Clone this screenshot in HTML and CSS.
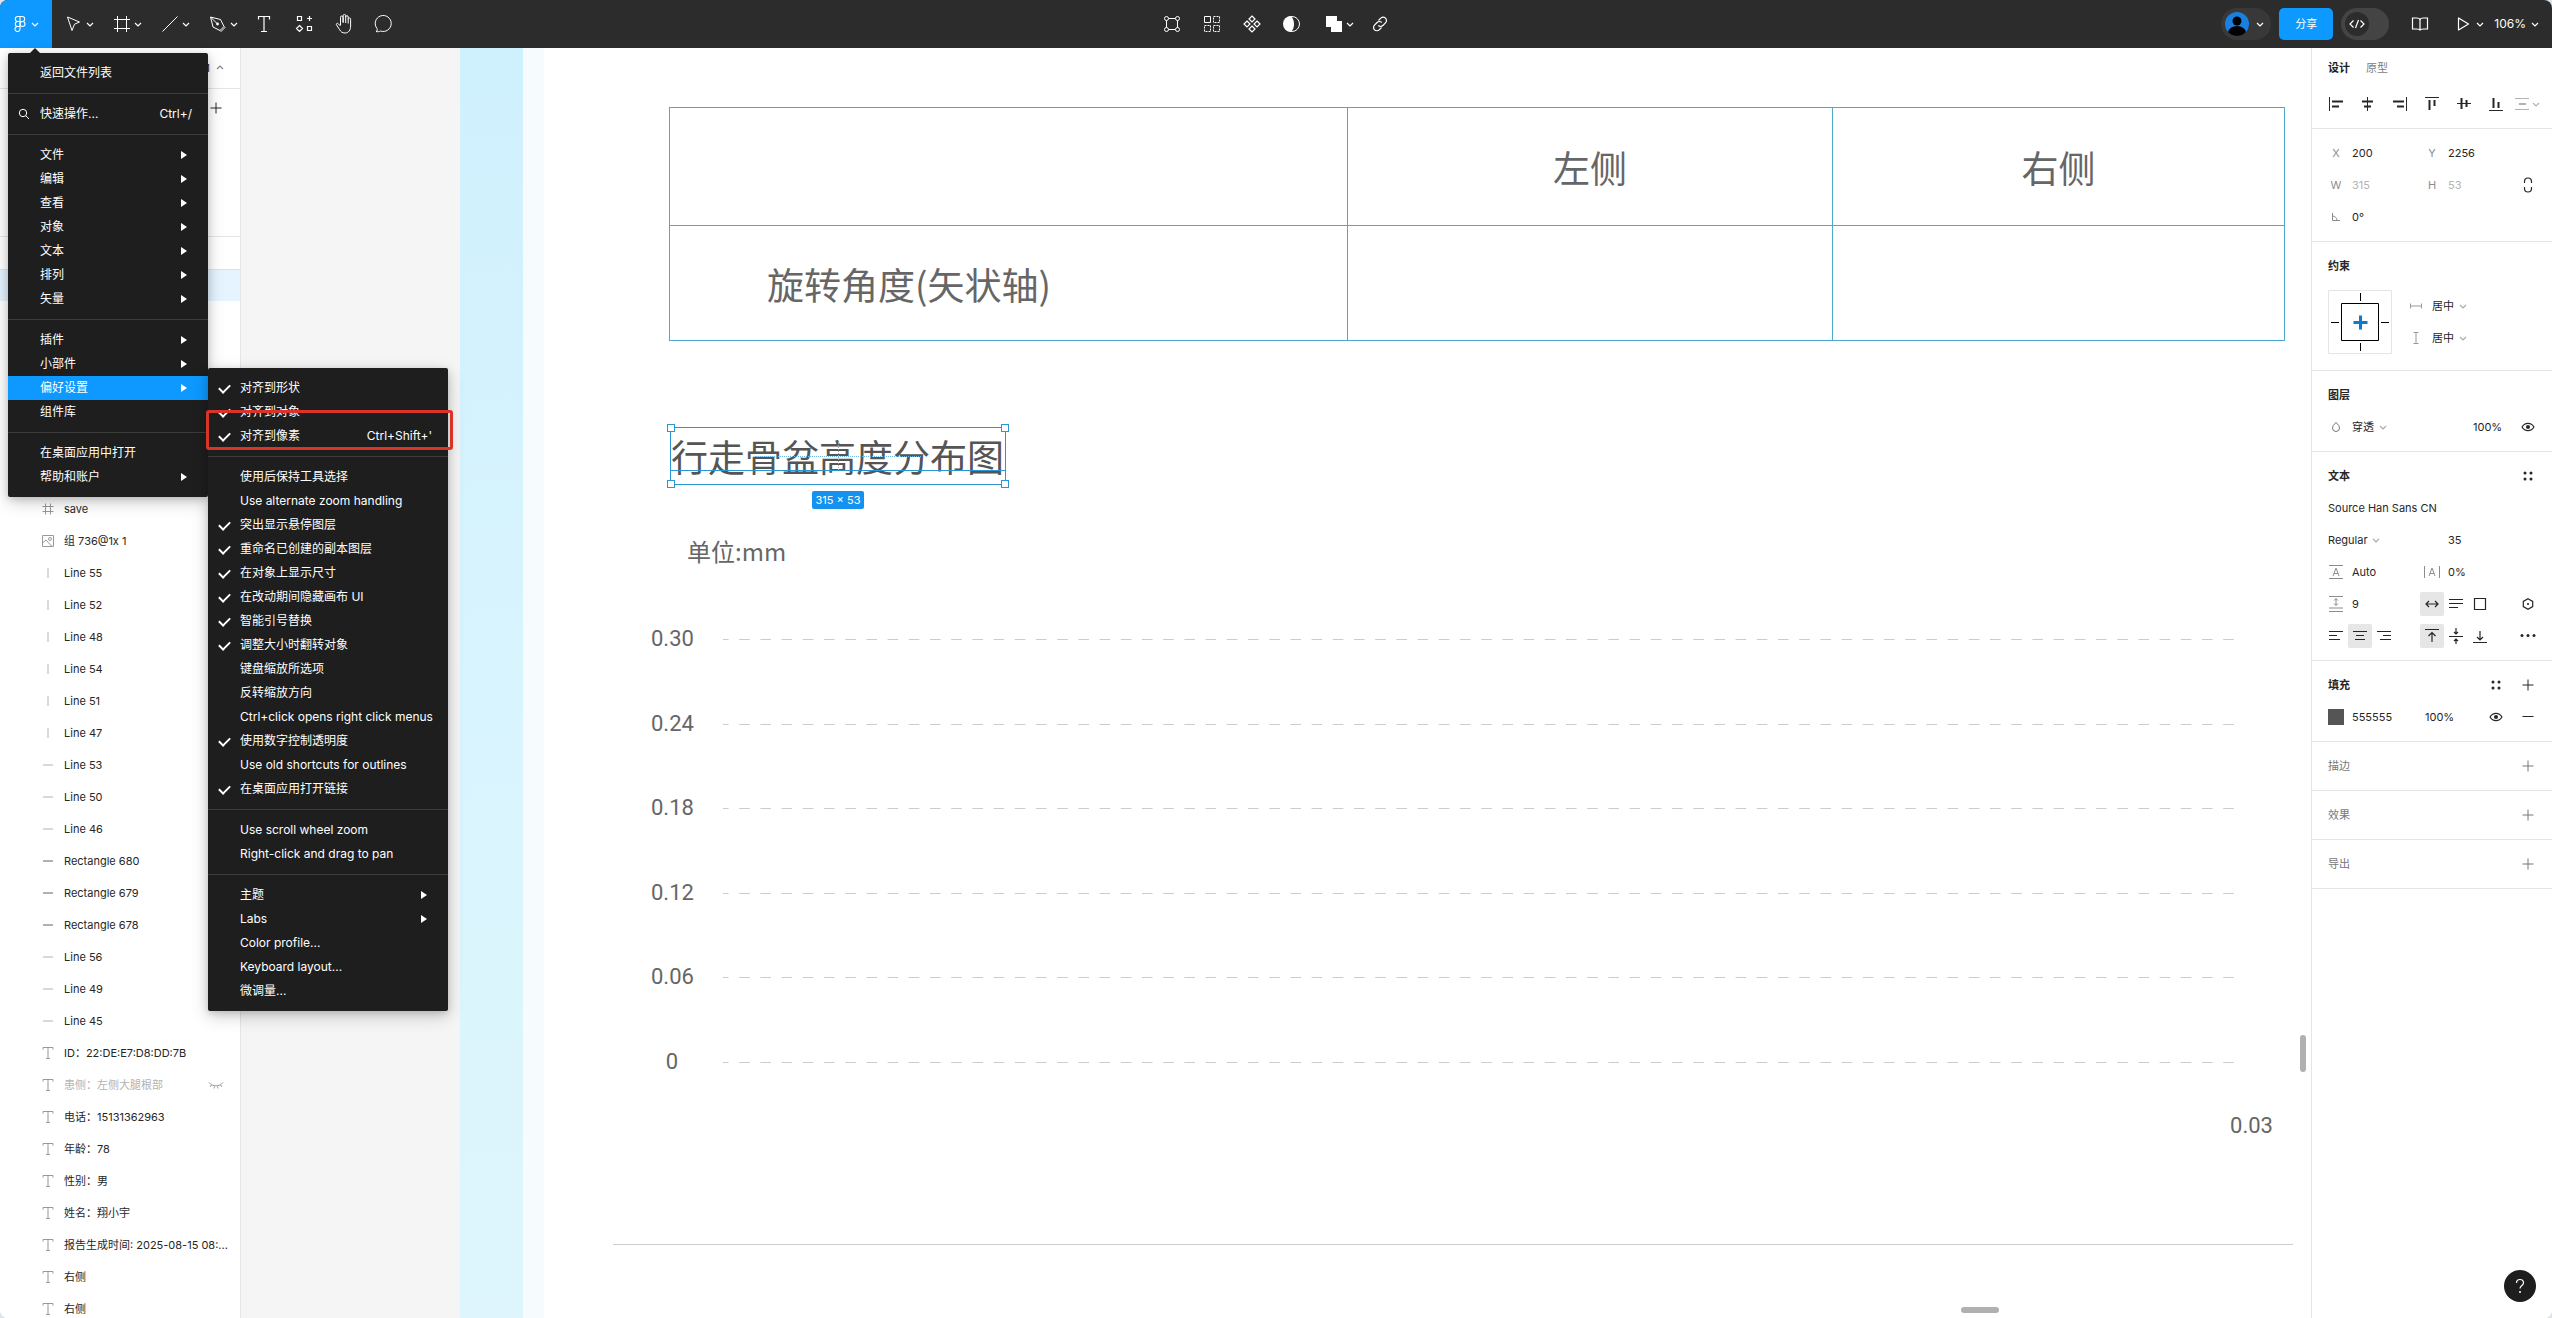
FILE: index.html
```html
<!DOCTYPE html>
<html lang="zh-CN">
<head>
<meta charset="utf-8">
<title>Figma</title>
<link rel="stylesheet" href="styles.css">
</head>
<body>
<svg class="sprite" aria-hidden="true">
  <symbol id="chev" viewBox="0 0 12 12"><path d="M3 5l3 3 3-3" fill="none" stroke="currentColor" stroke-width="1.2"/></symbol>
  <symbol id="plus" viewBox="0 0 16 16"><path d="M8 2.500v11M2.500 8h11" fill="none" stroke="currentColor"/></symbol>
  <symbol id="text" viewBox="0 0 16 16"><path d="M3 4.500V2.500h10v2M8 2.500v11M6 13.500h4" fill="none" stroke="currentColor"/></symbol>
  <symbol id="vline" viewBox="0 0 16 16"><path d="M8 3v10" stroke="currentColor" stroke-width="1.500"/></symbol>
  <symbol id="hline" viewBox="0 0 16 16"><path d="M3 8h10" stroke="currentColor" stroke-width="1.500"/></symbol>
  <symbol id="rect" viewBox="0 0 16 16"><path d="M3 8h10" stroke="#b0b0b0" stroke-width="2"/></symbol>
  <symbol id="eye" viewBox="0 0 16 16"><path d="M2 8c1.400-2.300 3.500-3.600 6-3.600S12.600 5.700 14 8c-1.400 2.300-3.500 3.600-6 3.600S3.400 10.300 2 8z" fill="none" stroke="currentColor" stroke-width="1.200"/><circle cx="8" cy="8" r="2" fill="currentColor"/></symbol>
  <symbol id="dots" viewBox="0 0 16 16"><g fill="currentColor"><circle cx="5" cy="5" r="1.500"/><circle cx="11" cy="5" r="1.500"/><circle cx="5" cy="11" r="1.500"/><circle cx="11" cy="11" r="1.500"/></g></symbol>
</svg>
<div class="app">
<header class="toolbar">
  <div class="tools">
    <div class="main-tool">
      <button class="logo" aria-label="主菜单"><svg class="i24" viewBox="0 0 24 24"><g fill="none" stroke="currentColor" stroke-width="1.100"><path d="M12 4.500H9.800a2.500 2.500 0 000 5H12zM12 4.500h2.200a2.500 2.500 0 010 5H12zM12 9.500H9.800a2.500 2.500 0 000 5H12zM12 14.500H9.800a2.500 2.500 0 102.200 2.500z"/><circle cx="14.500" cy="12" r="2.500"/></g></svg><svg class="i12"><use href="#chev"/></svg></button>
      <nav class="menu root-menu">
        <div class="group"><button>返回文件列表</button></div>
        <div class="group"><button><svg class="lead" viewBox="0 0 12 12"><circle cx="5" cy="5" r="3.700" fill="none" stroke="currentColor"/><path d="M7.700 7.700l3.300 3.300" stroke="currentColor"/></svg>快速操作...<kbd>Ctrl+/</kbd></button></div>
        <div class="group"><button class="sub">文件</button><button class="sub">编辑</button><button class="sub">查看</button><button class="sub">对象</button><button class="sub">文本</button><button class="sub">排列</button><button class="sub">矢量</button></div>
        <div class="group"><button class="sub">插件</button><button class="sub">小部件</button><button class="sub on">偏好设置</button><button>组件库</button></div>
        <div class="group"><button>在桌面应用中打开</button><button class="sub">帮助和账户</button></div>
      </nav>
      <nav class="menu prefs-menu">
        <div class="group">
          <label><input type="checkbox" checked>对齐到形状</label>
          <label><input type="checkbox" checked>对齐到对象</label>
          <label><input type="checkbox" checked>对齐到像素<kbd>Ctrl+Shift+'</kbd></label>
        </div>
        <div class="group">
          <label><input type="checkbox">使用后保持工具选择</label>
          <label><input type="checkbox">Use alternate zoom handling</label>
          <label><input type="checkbox" checked>突出显示悬停图层</label>
          <label><input type="checkbox" checked>重命名已创建的副本图层</label>
          <label><input type="checkbox" checked>在对象上显示尺寸</label>
          <label><input type="checkbox" checked>在改动期间隐藏画布 UI</label>
          <label><input type="checkbox" checked>智能引号替换</label>
          <label><input type="checkbox" checked>调整大小时翻转对象</label>
          <label><input type="checkbox">键盘缩放所选项</label>
          <label><input type="checkbox">反转缩放方向</label>
          <label><input type="checkbox">Ctrl+click opens right click menus</label>
          <label><input type="checkbox" checked>使用数字控制透明度</label>
          <label><input type="checkbox">Use old shortcuts for outlines</label>
          <label><input type="checkbox" checked>在桌面应用打开链接</label>
        </div>
        <div class="group">
          <label><input type="checkbox">Use scroll wheel zoom</label>
          <label><input type="checkbox">Right-click and drag to pan</label>
        </div>
        <div class="group"><button class="sub">主题</button><button class="sub">Labs</button><button>Color profile...</button><button>Keyboard layout...</button><button>微调量...</button></div>
        <div class="callout"></div>
      </nav>
    </div>
    <button class="tool drop" aria-label="移动"><svg class="i24" viewBox="0 0 24 24"><path d="M5.500 5l12 5-5 2.200-2.500 6.300z" fill="none" stroke="currentColor" stroke-linejoin="round"/></svg><svg class="i12"><use href="#chev"/></svg></button>
    <button class="tool drop" aria-label="画框"><svg class="i24" viewBox="0 0 24 24"><path d="M7.500 4v16M16.500 4v16M4 7.500h16M4 16.500h16" stroke="currentColor" fill="none"/></svg><svg class="i12"><use href="#chev"/></svg></button>
    <button class="tool drop" aria-label="直线"><svg class="i24" viewBox="0 0 24 24"><path d="M4.500 19.500l15-15" stroke="currentColor"/></svg><svg class="i12"><use href="#chev"/></svg></button>
    <button class="tool drop" aria-label="钢笔"><svg class="i24" viewBox="0 0 24 24"><g fill="none" stroke="currentColor" stroke-linejoin="round"><path d="M4.500 5l10 2.500 3.500 7-4 4-7-3.500zM14 18.500l1 1 4-4-1-1M4.500 5l6.500 6.500"/></g><circle cx="11.500" cy="12" r="1.400" fill="currentColor"/></svg><svg class="i12"><use href="#chev"/></svg></button>
    <button class="tool" aria-label="文本"><svg class="i24" viewBox="0 0 24 24"><path d="M6.500 7.500v-3h11v3M12 4.500v15M9 19.500h6" fill="none" stroke="currentColor" stroke-width="1.200"/></svg></button>
    <button class="tool" aria-label="资源"><svg class="i24" viewBox="0 0 24 24"><path d="M5.500 4.500h4v4h-4zM15.500 14.500h4v4h-4zM17.500 4v5M15 6.500h5M7.500 13.500l3 3-3 3-3-3z" fill="none" stroke="currentColor" stroke-width="1.200"/></svg></button>
    <button class="tool" aria-label="抓手"><svg class="i24" viewBox="0 0 24 24"><path d="M8.500 13V5.300a1.300 1.300 0 012.600 0V11M11.100 10V3.800a1.300 1.300 0 012.600 0V11M13.700 5a1.200 1.200 0 012.500 0v6.500M16.200 7.200a1.200 1.200 0 012.400 0V14c0 4-2 7-5.500 7-3 0-4.300-1.300-5.500-3.300l-3.100-4.800c-.7-1.200.9-2.200 1.900-1.100l2.100 2.200" fill="none" stroke="currentColor" stroke-linejoin="round"/></svg></button>
    <button class="tool" aria-label="评论"><svg class="i24" viewBox="0 0 24 24"><path d="M4 19.500c1.300-.6 1.500-1.400 1-3a8 8 0 113.500 2.500c-1.500.8-3 .9-4.500.5z" fill="none" stroke="currentColor" stroke-linejoin="round"/></svg></button>
  </div>
  <div class="context">
    <button class="tool" aria-label="编辑对象"><svg class="i24" viewBox="0 0 24 24"><g fill="none" stroke="currentColor"><path d="M8.500 6.500h7M8.500 17.500h7M6.500 8.500v7M17.500 8.500v7"/><circle cx="6.500" cy="6.500" r="2"/><circle cx="17.500" cy="6.500" r="2"/><circle cx="6.500" cy="17.500" r="2"/><circle cx="17.500" cy="17.500" r="2"/></g></svg></button>
    <button class="tool" aria-label="整理"><svg class="i24" viewBox="0 0 24 24"><g fill="none" stroke="currentColor"><path d="M4.500 4.500h6v6h-6z"/><path stroke-dasharray="2 1" d="M13.500 4.500h6v6h-6zM4.500 13.500h6v6h-6zM13.500 13.500h6v6h-6z"/></g></svg></button>
    <button class="tool" aria-label="创建组件"><svg class="i24" viewBox="0 0 24 24"><path d="M12 4l3 3-3 3-3-3zM12 14l3 3-3 3-3-3zM7 9l3 3-3 3-3-3zM17 9l3 3-3 3-3-3z" fill="none" stroke="currentColor" stroke-width="1.200"/></svg></button>
    <button class="tool" aria-label="蒙版"><svg class="i24" viewBox="0 0 24 24"><circle cx="12" cy="12" r="7.500" fill="none" stroke="currentColor"/><path d="M11 4a8 8 0 000 16c2-2 3-5 3-8s-1-6-3-8z" fill="currentColor"/></svg></button>
    <button class="tool drop" aria-label="布尔运算"><svg class="i24" viewBox="0 0 24 24"><path d="M4 4h11v5h5v11H9v-5H4z" fill="currentColor"/></svg><svg class="i12"><use href="#chev"/></svg></button>
    <button class="tool" aria-label="链接"><svg class="i24" viewBox="0 0 24 24"><path d="M10.500 8.500l2.300-2.300a3.200 3.200 0 014.700 4.700l-2.600 2.600a3.200 3.200 0 01-4.600 0M13.500 15.500l-2.300 2.300a3.200 3.200 0 01-4.700-4.700l2.600-2.600a3.200 3.200 0 014.600 0" fill="none" stroke="currentColor" stroke-width="1.200"/></svg></button>
  </div>
  <div class="account">
    <button class="user" aria-label="账户"><svg class="avatar" viewBox="0 0 24 24"><clipPath id="round"><circle cx="12" cy="12" r="12"/></clipPath><g clip-path="url(#round)"><path fill="#1a80e0" d="M0 0h24v24H0z"/><circle cx="12" cy="9" r="4.500"/><ellipse cx="12" cy="20.500" rx="9" ry="6.500"/></g></svg><svg class="i12"><use href="#chev"/></svg></button>
    <button class="share">分享</button>
    <button class="dev" aria-label="开发模式"><span><svg class="i16" viewBox="0 0 16 16"><path d="M4.500 4.500L1 8l3.500 3.500M11.500 4.500L15 8l-3.500 3.500M9.500 4l-3 8" fill="none" stroke="currentColor" stroke-width="1.200"/></svg></span></button>
    <button class="tool book" aria-label="文档"><svg class="i24" viewBox="0 0 24 24"><path d="M12 8c0-1.400-1.500-2-3.500-2h-4v11h4c2 0 3.500.4 3.500 1.500 0-1.100 1.500-1.500 3.500-1.500h4V6h-4C13.500 6 12 6.600 12 8zM12 8v10.500" fill="none" stroke="currentColor" stroke-width="1.200"/></svg></button>
    <button class="tool drop" aria-label="演示"><svg class="i24" viewBox="0 0 24 24"><path d="M6.500 6v12l10-6z" fill="none" stroke="currentColor" stroke-width="1.200" stroke-linejoin="round"/></svg><svg class="i12"><use href="#chev"/></svg></button>
    <button class="zoom">106%<svg class="i12"><use href="#chev"/></svg></button>
  </div>
</header>
<div class="workspace">
  <aside class="layers">
    <div class="pages-head"><span>页面 1</span><svg class="i12 up"><use href="#chev"/></svg></div>
    <div class="pages"><button aria-label="添加页面"><svg class="i16"><use href="#plus"/></svg></button></div>
    <div class="selected"></div>
    <ul>
      <li><svg class="i16" viewBox="0 0 16 16"><path d="M5.500 2.500v11M10.500 2.500v11M2.500 5.500h11M2.500 10.500h11" stroke="#999"/></svg>save</li>
      <li><svg class="i16" viewBox="0 0 16 16"><path d="M2.500 2.500h11v11h-11zM2.500 10L6 7l6 6.500" fill="none" stroke="#999"/><circle cx="10" cy="6" r="1.500" fill="none" stroke="#999"/></svg>组 736@1x 1</li>
      <li><svg class="i16"><use href="#vline"/></svg>Line 55</li>
      <li><svg class="i16"><use href="#vline"/></svg>Line 52</li>
      <li><svg class="i16"><use href="#vline"/></svg>Line 48</li>
      <li><svg class="i16"><use href="#vline"/></svg>Line 54</li>
      <li><svg class="i16"><use href="#vline"/></svg>Line 51</li>
      <li><svg class="i16"><use href="#vline"/></svg>Line 47</li>
      <li><svg class="i16"><use href="#hline"/></svg>Line 53</li>
      <li><svg class="i16"><use href="#hline"/></svg>Line 50</li>
      <li><svg class="i16"><use href="#hline"/></svg>Line 46</li>
      <li><svg class="i16"><use href="#rect"/></svg>Rectangle 680</li>
      <li><svg class="i16"><use href="#rect"/></svg>Rectangle 679</li>
      <li><svg class="i16"><use href="#rect"/></svg>Rectangle 678</li>
      <li><svg class="i16"><use href="#hline"/></svg>Line 56</li>
      <li><svg class="i16"><use href="#hline"/></svg>Line 49</li>
      <li><svg class="i16"><use href="#hline"/></svg>Line 45</li>
      <li><svg class="i16"><use href="#text"/></svg>ID：22:DE:E7:D8:DD:7B</li>
      <li class="hidden"><svg class="i16"><use href="#text"/></svg><span>患侧：左侧大腿根部</span><svg class="i16 lid" viewBox="0 0 16 16"><path d="M1 5.500c3.500 4.500 10.500 4.500 14 0M3.500 8l-1.500 2M6.500 9.500L6 11.500M9.500 9.500l.5 2M12.500 8l1.500 2" fill="none" stroke="#999"/></svg></li>
      <li><svg class="i16"><use href="#text"/></svg>电话：15131362963</li>
      <li><svg class="i16"><use href="#text"/></svg>年龄：78</li>
      <li><svg class="i16"><use href="#text"/></svg>性别：男</li>
      <li><svg class="i16"><use href="#text"/></svg>姓名：翔小宇</li>
      <li><svg class="i16"><use href="#text"/></svg>报告生成时间: 2025-08-15 08:...</li>
      <li><svg class="i16"><use href="#text"/></svg>右侧</li>
      <li><svg class="i16"><use href="#text"/></svg>右侧</li>
    </ul>
  </aside>
  <main class="canvas">
    <div class="stripe"></div>
    <div class="edge"></div>
    <section class="artboard">
      <table>
        <colgroup><col class="c1"><col class="c2"><col></colgroup>
        <tr class="head"><th></th><th>左侧</th><th>右侧</th></tr>
        <tr><td>旋转角度(矢状轴)</td><td></td><td></td></tr>
      </table>
      <h2>行走骨盆高度分布图<i class="h tl"></i><i class="h tr"></i><i class="h bl"></i><i class="h br"></i><i class="base"></i><i class="cross-h"></i><i class="cross-v"></i><span class="size">315 × 53</span></h2>
      <p class="unit">单位:mm</p>
      <div class="chart">
        <div class="tick"><span>0.30</span><svg><line x1="0" y1="12.500" x2="100%" y2="12.500"/></svg></div>
        <div class="tick"><span>0.24</span><svg><line x1="0" y1="12.500" x2="100%" y2="12.500"/></svg></div>
        <div class="tick"><span>0.18</span><svg><line x1="0" y1="12.500" x2="100%" y2="12.500"/></svg></div>
        <div class="tick"><span>0.12</span><svg><line x1="0" y1="12.500" x2="100%" y2="12.500"/></svg></div>
        <div class="tick"><span>0.06</span><svg><line x1="0" y1="12.500" x2="100%" y2="12.500"/></svg></div>
        <div class="tick"><span>0</span><svg><line x1="0" y1="12.500" x2="100%" y2="12.500"/></svg></div>
      </div>
      <p class="xlabel">0.03</p>
      <hr>
    </section>
    <div class="bar-v"></div>
    <div class="bar-h"></div>
  </main>
  <aside class="inspector">
    <section class="top">
      <div class="tabs"><button class="active">设计</button><button>原型</button></div>
      <div class="aligns">
        <button aria-label="左对齐"><svg class="i16" viewBox="0 0 16 16"><path d="M1.500 1v14" stroke="currentColor"/><path d="M4 5.500h11M4 10.500h7" stroke="currentColor" stroke-width="2"/></svg></button>
        <button aria-label="水平居中"><svg class="i16" viewBox="0 0 16 16"><path d="M7.500 1v14" stroke="currentColor"/><path d="M2 5.500h11M4 10.500h7" stroke="currentColor" stroke-width="2"/></svg></button>
        <button aria-label="右对齐"><svg class="i16" viewBox="0 0 16 16"><path d="M14.500 1v14" stroke="currentColor"/><path d="M1 5.500h11M5 10.500h7" stroke="currentColor" stroke-width="2"/></svg></button>
        <button aria-label="顶对齐"><svg class="i16" viewBox="0 0 16 16"><path d="M1 1.500h14" stroke="currentColor"/><path d="M5.500 4v10M10.500 4v6" stroke="currentColor" stroke-width="2"/></svg></button>
        <button aria-label="垂直居中"><svg class="i16" viewBox="0 0 16 16"><path d="M1 7.500h14" stroke="currentColor"/><path d="M5.500 2v11M10.500 4v7" stroke="currentColor" stroke-width="2"/></svg></button>
        <button aria-label="底对齐"><svg class="i16" viewBox="0 0 16 16"><path d="M1 14.500h14" stroke="currentColor"/><path d="M5.500 2v10M10.500 6v6" stroke="currentColor" stroke-width="2"/></svg></button>
        <button class="dim" aria-label="分布"><svg class="i16" viewBox="0 0 16 16"><path d="M1 2.500h14M1 13.500h14" stroke="currentColor"/><path d="M5 8h7" stroke="currentColor" stroke-width="2"/></svg><svg class="i12"><use href="#chev"/></svg></button>
      </div>
    </section>
    <section>
      <div class="grid"><label for="x">X</label><input id="x" value="200"><label for="y">Y</label><input id="y" value="2256"></div>
      <div class="grid off"><label for="w">W</label><input id="w" value="315"><label for="h">H</label><input id="h" value="53"><button aria-label="约束比例"><svg class="i16" viewBox="0 0 16 16"><path d="M4.500 6V4.500a3.500 3.500 0 017 0V6M4.500 10v1.500a3.500 3.500 0 007 0V10" fill="none" stroke="currentColor" stroke-width="1.200"/></svg></button></div>
      <div class="grid"><label for="r" aria-label="旋转"><svg class="i16" viewBox="0 0 16 16"><path d="M4.500 4v7.500H12M4.500 7a4.500 4.500 0 014.500 4.500" fill="none" stroke="currentColor"/></svg></label><input id="r" value="0°"></div>
    </section>
    <section>
      <h3>约束</h3>
      <div class="con-body">
        <svg class="con-box" viewBox="0 0 64 64"><path d="M.5.5h63v63H.5z" fill="none" stroke="#e5e5e5"/><path d="M13.500 13.500h37v37h-37zM32.500 3v8M32.500 53v8M3 32.500h8M53 32.500h8" fill="none" stroke="#000"/><path d="M32.500 25.500v14M25.500 32.500h14" stroke="#0d7bd0" stroke-width="3"/></svg>
        <div class="con-list">
          <div class="pick"><svg class="i16" viewBox="0 0 16 16"><path d="M2.500 5.500v5M13.500 5.500v5M3 8h10" stroke="#999"/></svg><select aria-label="水平约束"><option>居中</option></select><svg class="i12"><use href="#chev"/></svg></div>
          <div class="pick"><svg class="i16" viewBox="0 0 16 16"><path d="M5.500 2.500h5M5.500 13.500h5M8 3v10" stroke="#999"/></svg><select aria-label="垂直约束"><option>居中</option></select><svg class="i12"><use href="#chev"/></svg></div>
        </div>
      </div>
    </section>
    <section>
      <h3>图层</h3>
      <div class="row"><span class="cell grey"><svg class="i16" viewBox="0 0 16 16"><path d="M8 3.500c2 2.200 3.500 3.600 3.500 5.500a3.500 3.500 0 01-7 0C4.500 7.100 6 5.700 8 3.500z" fill="none" stroke="currentColor"/></svg></span><div class="pick wide"><select aria-label="混合模式"><option>穿透</option></select><svg class="i12"><use href="#chev"/></svg></div><input class="pct" aria-label="不透明度" value="100%"><button class="cell" aria-label="显示"><svg class="i16"><use href="#eye"/></svg></button></div>
    </section>
    <section>
      <div class="row"><h3>文本</h3><button class="cell" aria-label="文本样式"><svg class="i16"><use href="#dots"/></svg></button></div>
      <div class="row pad">Source Han Sans CN</div>
      <div class="row pad"><div class="pick weight"><select aria-label="字重"><option>Regular</option></select><svg class="i12"><use href="#chev"/></svg></div><input class="fs" aria-label="字号" value="35"></div>
      <div class="grid"><label for="lh" aria-label="行高"><svg class="i16" viewBox="0 0 16 16"><path d="M1 1.500h14M1 14.500h14M5 12l3-8 3 8M6 9.500h4" fill="none" stroke="currentColor"/></svg></label><input id="lh" value="Auto"><label for="ls" aria-label="字距"><svg class="i16" viewBox="0 0 16 16"><path d="M.5 2v12M15.500 2v12M5 12l3-8 3 8M6 9.500h4" fill="none" stroke="currentColor"/></svg></label><input id="ls" value="0%"></div>
      <div class="grid"><label for="ps" aria-label="段落间距"><svg class="i16" viewBox="0 0 16 16"><path d="M1 .5h14M1 12h14M1 15.500h14M8 2.500v7M6 4.500l2-2 2 2M6 7.500l2 2 2-2" fill="none" stroke="currentColor"/></svg></label><input id="ps" value="9"><div class="seg">
        <button class="on" aria-label="自动宽度"><svg class="i16" viewBox="0 0 16 16"><path d="M2 8h12M5 5L2 8l3 3M11 5l3 3-3 3" fill="none" stroke="currentColor" stroke-width="1.200"/></svg></button><button aria-label="自动高度"><svg class="i16" viewBox="0 0 16 16"><path d="M1 3.500h14M1 7.500h14M1 11.500h9" stroke="currentColor"/></svg></button><button aria-label="固定尺寸"><svg class="i16" viewBox="0 0 16 16"><path d="M2.500 2.500h11v11h-11z" fill="none" stroke="currentColor" stroke-width="1.200"/></svg></button></div><button aria-label="设置"><svg class="i16" viewBox="0 0 16 16"><path d="M8 2.700l4.700 2.700v5.200L8 13.300l-4.700-2.700V5.400z" fill="none" stroke="currentColor" stroke-width="1.200"/><circle cx="8" cy="8" r="1" fill="currentColor"/></svg></button></div>
      <div class="grid"><div class="seg span2">
        <button aria-label="文本左对齐"><svg class="i16" viewBox="0 0 16 16"><path d="M1 3.500h14M1 7.500h8M1 11.500h11" stroke="currentColor"/></svg></button><button class="on" aria-label="文本居中"><svg class="i16" viewBox="0 0 16 16"><path d="M1 3.500h14M4 7.500h8M3 11.500h10" stroke="currentColor"/></svg></button><button aria-label="文本右对齐"><svg class="i16" viewBox="0 0 16 16"><path d="M1 3.500h14M7 7.500h8M4 11.500h11" stroke="currentColor"/></svg></button></div><div class="seg">
        <button class="on" aria-label="顶部"><svg class="i16" viewBox="0 0 16 16"><path d="M1 1.500h14M8 14V4.500M4.500 8L8 4.500 11.500 8" fill="none" stroke="currentColor" stroke-width="1.200"/></svg></button><button aria-label="中部"><svg class="i16" viewBox="0 0 16 16"><path d="M1 8.500h14M8 0v6M6 4l2 2 2-2M8 16.500V11M6 13l2-2 2 2" fill="none" stroke="currentColor" stroke-width="1.200"/></svg></button><button aria-label="底部"><svg class="i16" viewBox="0 0 16 16"><path d="M1 14.500h14M8 3v9M5 9l3 3 3-3" fill="none" stroke="currentColor" stroke-width="1.200"/></svg></button></div><button aria-label="更多"><svg class="i16" viewBox="0 0 16 16"><g fill="currentColor"><circle cx="2" cy="7.500" r="1.500"/><circle cx="8" cy="7.500" r="1.500"/><circle cx="14" cy="7.500" r="1.500"/></g></svg></button></div>
    </section>
    <section>
      <div class="row"><h3>填充</h3><button class="cell" aria-label="填充样式"><svg class="i16"><use href="#dots"/></svg></button><button class="cell" aria-label="添加填充"><svg class="i16"><use href="#plus"/></svg></button></div>
      <div class="row pad"><button class="swatch" aria-label="颜色"></button><input class="hex" aria-label="色值" value="555555"><input class="alpha" aria-label="填充不透明度" value="100%"><button class="cell" aria-label="显示填充"><svg class="i16"><use href="#eye"/></svg></button><button class="cell" aria-label="移除填充"><svg class="i16" viewBox="0 0 16 16"><path d="M2.500 7.500h11" stroke="currentColor"/></svg></button></div>
    </section>
    <section class="muted"><div class="row"><h3>描边</h3><button class="cell" aria-label="添加描边"><svg class="i16"><use href="#plus"/></svg></button></div></section>
    <section class="muted"><div class="row"><h3>效果</h3><button class="cell" aria-label="添加效果"><svg class="i16"><use href="#plus"/></svg></button></div></section>
    <section class="muted"><div class="row"><h3>导出</h3><button class="cell" aria-label="添加导出"><svg class="i16"><use href="#plus"/></svg></button></div></section>
    <button class="help" aria-label="帮助"><svg class="i16" viewBox="0 0 16 16"><path d="M4.500 5a3.500 3.500 0 117 0c0 2.500-3.500 2.500-3.500 5.500" fill="none" stroke="currentColor" stroke-width="1.200"/><circle cx="8" cy="14" r="1" fill="currentColor"/></svg></button>
  </aside>
</div>
</div>
</body>
</html>
```
FILE: styles.css
```css
* { box-sizing: border-box; }
body {
  margin: 0;
  background: #dfe3e6;
  color: #262626;
  font: 11px/16px Inter, "Noto Sans CJK SC", sans-serif;
}
button, input, select {
  margin: 0; padding: 0; border: 0;
  background: none; color: inherit; font: inherit;
  appearance: none;
}
input:focus, select:focus { outline: none; }
h2, h3, p, ul { margin: 0; padding: 0; }
svg { display: block; flex: none; }
.sprite { position: absolute; width: 0; height: 0; }
.i12 { width: 12px; height: 12px; }
.i16 { width: 16px; height: 16px; }
.i24 { width: 24px; height: 24px; }

.app {
  display: flex; flex-direction: column;
  height: 100vh; overflow: hidden;
  border-radius: 8px; background: #fff;
}

/* toolbar */
.toolbar {
  display: grid; grid-template-columns: 1fr auto 1fr;
  flex: none; height: 48px;
  background: #2c2c2c; color: #fff;
}
.tools, .context, .account { display: flex; }
.tool {
  display: flex; align-items: center; justify-content: center;
  width: 40px; height: 48px;
}
.drop { width: 48px; justify-content: flex-start; padding-left: 10px; }
.drop .i12 { margin-left: -2px; }
.main-tool { position: relative; z-index: 5; }
.logo {
  display: flex; align-items: center;
  width: 52px; height: 48px; padding-left: 8px;
  background: #0d99ff;
}
.logo .i12 { margin-left: -3px; }
.account { justify-content: flex-end; align-items: center; padding-right: 11px; }
.user {
  display: flex; align-items: center; gap: 5px;
  width: 50px; height: 32px; padding-left: 4px;
  border-radius: 16px; background: #383838;
}
.avatar { width: 24px; height: 24px; }
.share {
  width: 54px; height: 32px; margin: 0 8px;
  border-radius: 5px; background: #0d99ff;
}
.dev { width: 48px; height: 32px; border-radius: 16px; background: #444; }
.dev span {
  display: flex; align-items: center; justify-content: center;
  width: 24px; height: 24px; margin-left: 4px;
  border-radius: 50%; background: #2c2c2c;
}
.book { margin: 0 2px 0 11px; }
.zoom { display: flex; align-items: center; gap: 3px; height: 32px; padding-left: 4px; font-size: 12px; }

/* menus */
.menu {
  position: absolute;
  border-radius: 2px;
  background: #1e1e1e; color: #fff;
  font-size: 12px;
  box-shadow: 0 5px 17px rgba(0,0,0,.2), 0 2px 7px rgba(0,0,0,.15);
}
.root-menu { top: 53px; left: 8px; width: 200px; }
.root-menu::before {
  content: ""; position: absolute; left: 22px; top: -5px;
  border: 5px solid transparent; border-top: 0; border-bottom-color: #1e1e1e;
}
.prefs-menu { top: 368px; left: 208px; width: 240px; }
.group { padding: 8px 0; }
.group + .group { border-top: 1px solid #3c3c3c; }
.group button, .group label {
  position: relative;
  display: flex; align-items: center;
  width: 100%; height: 24px; padding: 0 16px 0 32px;
  text-align: left; white-space: nowrap;
}
.group kbd { margin-left: auto; font: inherit; }
.group .lead { position: absolute; left: 10px; width: 12px; height: 12px; }
.sub::after {
  content: ""; margin: 0 5px 0 auto;
  border: 4px solid transparent; border-left: 6px solid #fff; border-right: 0;
}
.group .on { background: #0d99ff; }
.group input { position: absolute; left: 10px; width: 12px; height: 12px; }
.group input:checked::before {
  content: ""; position: absolute; left: 1px; top: 2px;
  width: 9px; height: 5px;
  border: solid #fff; border-width: 0 0 2px 2px;
  transform: rotate(-45deg);
}
.callout {
  position: absolute; left: -2px; right: -5px; top: 42px; height: 40px;
  border: 3px solid #d8342a; border-radius: 3px;
}

/* layers */
.workspace { display: flex; flex: 1; min-height: 0; }
.layers {
  flex: none; width: 241px; overflow: hidden;
  border-right: 1px solid #e5e5e5; background: #fff;
}
.pages-head {
  display: flex; align-items: center; justify-content: flex-end; gap: 4px;
  height: 41px; padding-right: 14px; border-bottom: 1px solid #e5e5e5;
}
.up { transform: rotate(180deg); color: #888; }
.pages {
  display: flex; justify-content: flex-end; align-items: flex-start;
  height: 148px; padding: 11px 16px 0 0; border-bottom: 1px solid #e5e5e5;
}
.selected { height: 32px; margin: 32px 0 192px; background: #e5f4ff; border-top: 1px solid #d6e6f0; }
.layers ul { list-style: none; }
.layers li {
  display: flex; align-items: center; gap: 8px;
  height: 32px; padding: 0 8px 0 40px; white-space: nowrap;
}
.layers li svg { color: #ccc; }
.layers li use[href="#text"] { color: #999; }
.layers .hidden { color: #b3b3b3; }
.lid { margin: 0 8px 0 auto; }

/* canvas */
.canvas {
  position: relative;
  display: flex; flex: 1; min-width: 0; overflow: hidden;
  padding-left: 219px; background: #f5f5f5;
}
.stripe { flex: none; width: 63px; background: linear-gradient(#cff0fd, #daf5fe 60%, #def5fd); }
.edge { flex: none; width: 21px; background: #f6fbfd; }
.artboard {
  flex: 1; padding: 59px 18px 0 69px;
  background: #fff; color: #666;
  font-family: "Noto Sans CJK SC", sans-serif;
}
.artboard table {
  width: calc(100% - 64px); height: 234px; margin: 0 8px 0 56px;
  table-layout: fixed; border-collapse: collapse;
  font-size: 37px; line-height: 56px;
}
.c1 { width: 42%; }
.c2 { width: 30%; }
.head { height: 118px; }
.artboard th, .artboard td { padding: 0; border: 1px solid #4fa8d2; font-weight: 400; }
.artboard td { padding: 2px 0 0 97px; text-align: left; }
.artboard h2 {
  position: relative; width: 336px; height: 58px; margin: 86px 0 0 57px;
  border: 1px solid #2b96d4;
  color: #555; font-size: 37px; line-height: 56px; font-weight: 400; white-space: nowrap;
}
.h { position: absolute; width: 8px; height: 8px; border: 1px solid #2b96d4; background: #fff; }
.tl { left: -4px; top: -4px; }
.tr { right: -4px; top: -4px; }
.bl { left: -4px; bottom: -4px; }
.br { right: -4px; bottom: -4px; }
.base { position: absolute; left: 0; right: 0; top: 42px; border-top: 1px solid #2b96d4; }
.cross-h { position: absolute; left: 84px; right: 84px; top: 28px; border-top: 1px dotted #6bb6e0; }
.cross-v { position: absolute; left: 167px; top: 14px; bottom: 14px; border-left: 1px dotted #6bb6e0; }
.size {
  position: absolute; left: 141px; top: 63px;
  width: 52px; height: 18px; border-radius: 2px;
  background: #1592f0; color: #fff;
  font: 11px/18px Inter, sans-serif; text-align: center;
}
.unit { margin: 48px 0 0 74px; font-size: 24px; line-height: 36px; }
.chart {
  display: flex; flex-direction: column; justify-content: space-between;
  height: 447px; margin: 58px 53px 0 38px;
}
.tick { display: flex; height: 24px; font: 22px/24px Roboto, sans-serif; }
.tick span { flex: none; width: 42px; margin-right: 30px; text-align: center; }
.tick svg { flex: 1; width: 100%; min-width: 0; height: 24px; }
.tick line { stroke: #ccc; stroke-width: 1; stroke-dasharray: 10.6; stroke-dashoffset: 5; }
.xlabel { margin: 40px 20px 0 0; font: 22px/24px Roboto, sans-serif; text-align: right; }
.artboard hr { margin: 106px 0 0; border: 0; border-top: 1px solid #ccc; }
.bar-v, .bar-h { position: absolute; border-radius: 3px; background: #b0b0b0; }
.bar-v { right: 5px; top: 75%; margin-top: 34px; width: 6px; height: 37px; }
.bar-h { bottom: 5px; right: 312px; width: 38px; height: 6px; }

/* inspector */
.inspector { flex: none; width: 241px; border-left: 1px solid #e5e5e5; background: #fff; }
.inspector section { padding: 8px; border-bottom: 1px solid #e5e5e5; }
.inspector .top { padding-top: 0; }
.tabs { display: flex; gap: 16px; height: 40px; padding-left: 8px; color: #808080; }
.tabs .active { color: #1e1e1e; font-weight: 700; }
.aligns { display: flex; }
.aligns button { display: flex; align-items: center; justify-content: center; width: 32px; height: 32px; flex: none; }
.aligns .dim { color: #b3b3b3; }
.inspector h3 { flex: 1; height: 32px; padding-left: 8px; font-size: 11px; line-height: 32px; font-weight: 700; }
.inspector .muted h3 { color: #777; font-weight: 400; }
.muted .cell { color: #777; }
.grid { display: grid; grid-template-columns: 32px 64px 32px 64px 32px; height: 32px; align-items: center; }
.grid label { display: flex; justify-content: center; color: #8c8c8c; }
.grid input { width: 60px; }
.grid > button { grid-column: 5; justify-self: center; }
.off input { color: #b3b3b3; }
.seg { display: flex; grid-column: 3 / 5; margin-left: 4px; }
.span2 { grid-column: 1 / 3; }
.seg button { display: flex; align-items: center; justify-content: center; width: 24px; height: 24px; border-radius: 2px; }
.seg .on { background: #e6e6e6; }
.row { display: flex; align-items: center; height: 32px; }
.pad { padding-left: 8px; }
.cell { display: flex; align-items: center; justify-content: center; width: 32px; height: 32px; flex: none; }
.grey { color: #777; }
.con-body { display: flex; padding: 8px 0 8px 8px; gap: 16px; }
.con-box { width: 64px; height: 64px; }
.pick { display: flex; align-items: center; height: 32px; }
.pick select { width: 24px; }
.pick .i16 { margin-right: 8px; }
.pick .i12 { color: #aaa; margin-left: 1px; }
.wide { flex: 1; }
.pct { width: 39px; }
.weight { width: 120px; }
.weight select { width: 40px; }
.weight .i12 { margin-left: 2px; }
.fs { width: 64px; }
.swatch { width: 16px; height: 16px; background: #555; }
.hex { width: 81px; padding-left: 8px; }
.alpha { flex: 1; min-width: 0; }
.inspector .help {
  position: absolute; right: 16px; bottom: 16px;
  display: flex; align-items: center; justify-content: center;
  width: 32px; height: 32px; border-radius: 50%;
  background: #1e1e1e; color: #fff;
}
```
